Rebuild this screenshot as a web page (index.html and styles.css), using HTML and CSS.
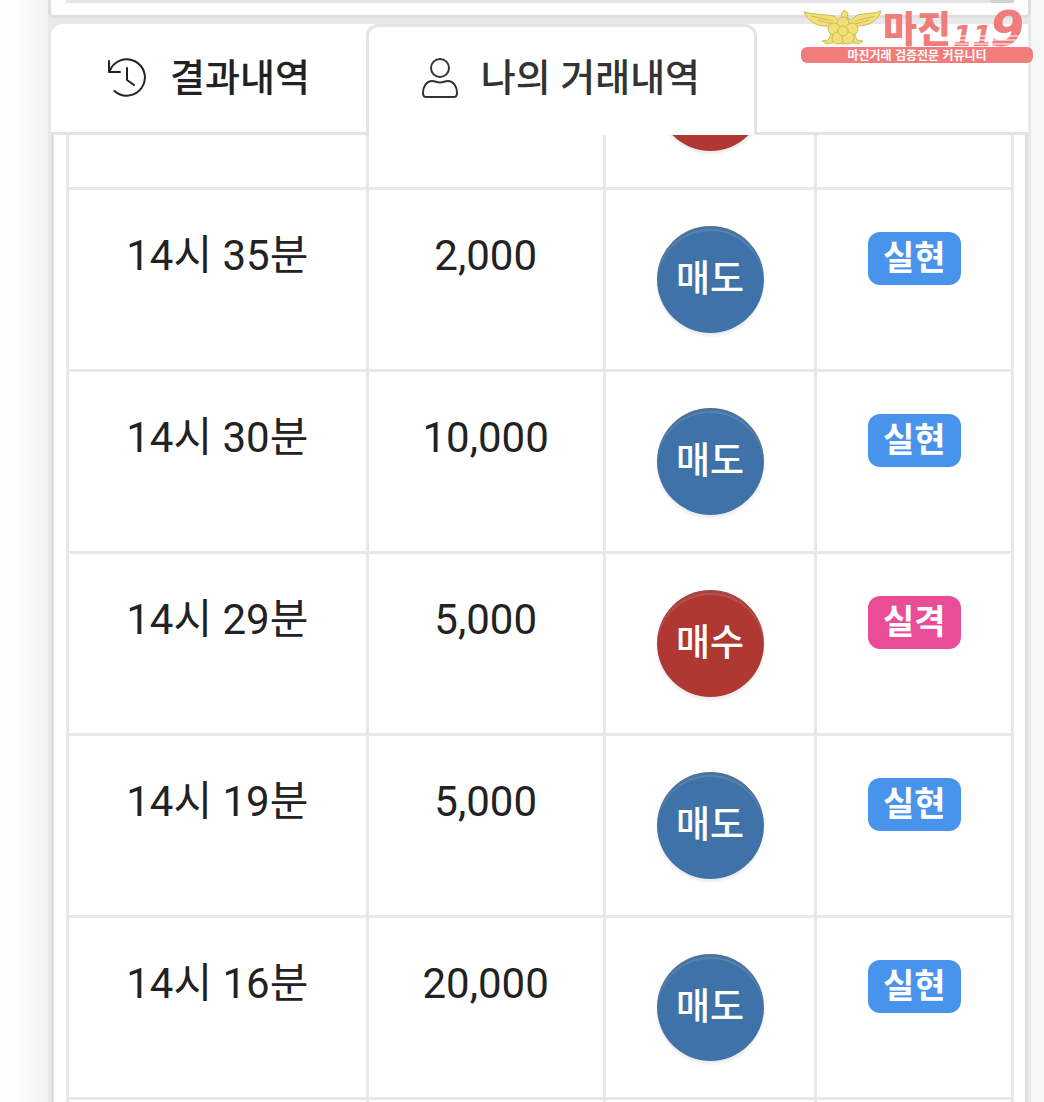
FILE: index.html
```html
<!DOCTYPE html>
<html lang="ko">
<head>
    <meta charset="UTF-8">
    <meta name="viewport" content="width=device-width, initial-scale=1.0">
    <title>나의 거래내역</title>
    <link rel="stylesheet" href="styles.css">
</head>
<body>
<div class="page">
    <div class="chart-box">
        <div class="scrollbar"><div class="scroll-thumb"></div></div>
    </div>

    <div class="history">
        <div class="tabs">
            <button class="tab" type="button">
                <svg class="tab-icon" viewBox="0 0 40 40" aria-hidden="true">
                    <path d="M2 3v11h11M2.500 13.500A18.200 18.200 0 1 1 7.500 33M20 10v12l7 5"/>
                </svg>
                <span>결과내역</span>
            </button>
            <button class="tab active" type="button">
                <svg class="tab-icon user" viewBox="2 0 36 40" aria-hidden="true">
                    <circle cx="20" cy="10" r="9"/>
                    <path d="M12 23c4 0 4 1.500 8 1.500s4-1.500 8-1.500c5 0 9 5 9 12 0 3-1 4-3 4H6c-2 0-3-1-3-4 0-7 4-12 9-12z"/>
                </svg>
                <span>나의 거래내역</span>
            </button>
        </div>

        <div class="panel">
            <table class="trades">
                <colgroup>
                    <col class="col-time">
                    <col class="col-amount">
                    <col class="col-side">
                    <col class="col-result">
                </colgroup>
                <tbody>
                    <tr>
                        <td></td>
                        <td></td>
                        <td><span class="side buy"></span></td>
                        <td></td>
                    </tr>
                    <tr>
                        <td>14시 35분</td>
                        <td>2,000</td>
                        <td><span class="side sell">매도</span></td>
                        <td><span class="badge win">실현</span></td>
                    </tr>
                    <tr>
                        <td>14시 30분</td>
                        <td>10,000</td>
                        <td><span class="side sell">매도</span></td>
                        <td><span class="badge win">실현</span></td>
                    </tr>
                    <tr>
                        <td>14시 29분</td>
                        <td>5,000</td>
                        <td><span class="side buy">매수</span></td>
                        <td><span class="badge lose">실격</span></td>
                    </tr>
                    <tr>
                        <td>14시 19분</td>
                        <td>5,000</td>
                        <td><span class="side sell">매도</span></td>
                        <td><span class="badge win">실현</span></td>
                    </tr>
                    <tr>
                        <td>14시 16분</td>
                        <td>20,000</td>
                        <td><span class="side sell">매도</span></td>
                        <td><span class="badge win">실현</span></td>
                    </tr>
                    <tr>
                        <td></td>
                        <td></td>
                        <td></td>
                        <td></td>
                    </tr>
                </tbody>
            </table>
        </div>
    </div>
</div>

<!-- Community logo over the top right corner -->
<div class="logo">
    <div class="logo-top">
        <svg class="emblem" viewBox="0 0 80 38" aria-hidden="true">
            <path d="M1 3c10 3 20 2 30 4l5 5 4-2-2-5 3-4 4 3-1 5 5 2 5-5c9-2 17-1 24-4-3 10-12 15-24 15l-2 9 2 5 6 1-5 3-8-2-7 2-8-2-8 2-5-3 6-1 3-5-2-9C15 18 5 13 1 3z"/>
            <path d="M8 7l22 5M14 11l16 4M72 7l-20 5M66 11l-14 4"/>
            <circle cx="40" cy="14" r="6"/>
            <circle cx="31" cy="20" r="6"/>
            <circle cx="49" cy="20" r="6"/>
            <circle cx="35" cy="29" r="6"/>
            <circle cx="45" cy="29" r="6"/>
            <circle cx="40" cy="22" r="5"/>
        </svg>
        <span class="logo-name">마진</span>
        <svg class="logo-number" viewBox="0 0 80 38">
            <text class="number-small" x="2" y="37">11</text>
            <text class="number-big" x="39" y="37">9</text>
            <path d="M0 27h74M0 31h74M0 35h74"/>
        </svg>
    </div>
    <div class="logo-slogan">마진거래 검증전문 커뮤니티</div>
</div>
</body>
</html>
```
FILE: styles.css
```css
* {
    box-sizing: border-box;
}

body {
    font-family: Roboto, 'Noto Sans CJK KR', sans-serif;
    color: #222;
    margin: 0;
    height: 100vh;
    overflow: hidden;
    background: #f7f7f7;
}

.page {
    display: flex;
    flex-direction: column;
    gap: 6px;
    height: 100%;
    padding: 0 13px 0 48px;
    background: linear-gradient(to right, #fff 0, #fdfdfd 16px, #f2f2f2 48px, #e9e9e9 48px, #e9e9e9 calc(100% - 13px), #f7f7f7 calc(100% - 13px));
}

.chart-box {
    height: 18px;
    padding: 0 14px 0 15px;
    background: #fdfdfd;
    border: 3px solid #dedede;
    border-top: none;
    border-radius: 0 0 6px 6px;
}

.scrollbar {
    height: 3px;
    background: #e4e4e4;
}

.scroll-thumb {
    width: 24px;
    height: 3px;
    margin-left: auto;
    background: #d2d2d6;
}

.history {
    flex: 1;
    display: flex;
    flex-direction: column;
    min-height: 0;
    padding: 0 3px;
}

.tabs {
    display: flex;
    height: 111px;
    background: linear-gradient(#e4e4e4, #e4e4e4) bottom / 100% 3px no-repeat #fff;
    border-radius: 12px 0 0 0;
}

.tab {
    display: flex;
    align-items: center;
    gap: 23px;
    padding: 0 56px 3px;
    border: none;
    background: none;
    color: #222;
    font-family: inherit;
    font-size: 38px;
    font-weight: 500;
    line-height: 56px;
    white-space: nowrap;
    cursor: pointer;
}

.tab.active {
    padding: 0 54px 6px 53px;
    background: #fff;
    border: 3px solid #e4e4e4;
    border-bottom: none;
    border-radius: 12px 12px 0 0;
    color: #333;
}

.tab-icon {
    width: 40px;
    height: 40px;
    flex: none;
    fill: none;
    stroke: currentColor;
    stroke-width: 2;
    stroke-linecap: round;
    stroke-linejoin: round;
}

.tab-icon.user {
    width: 36px;
}

.panel {
    flex: 1;
    min-height: 0;
    overflow: hidden;
    padding: 0 11px 0 12px;
    background: #fff;
    border: solid #e0e0e0;
    border-width: 0 3px;
}

/* list is scrolled, the first row is half under the tabs */
.trades {
    width: 100%;
    margin-top: -130px;
    border-collapse: collapse;
    table-layout: fixed;
}

.col-time {
    width: 31.7%;
}

.col-amount {
    width: 25.1%;
}

.col-side {
    width: 22.4%;
}

.col-result {
    width: 20.8%;
}

.trades td {
    height: 182px;
    padding: 36px 0 0;
    border: 3px solid #e8e8e8;
    font-size: 42px;
    line-height: 60px;
    text-align: center;
    vertical-align: top;
}

.side {
    display: block;
    width: 107px;
    height: 107px;
    margin: 0 auto;
    border-radius: 50%;
    color: #fff;
    font-size: 37px;
    font-weight: 500;
    line-height: 107px;
    box-shadow: inset 0 3px 0 rgba(0, 0, 0, 0.12), inset 0 5px 0 rgba(255, 255, 255, 0.12), 0 3px 3px rgba(0, 0, 0, 0.08);
}

.sell {
    background-color: #3f72a8;
}

.buy {
    background-color: #b03833;
}

.badge {
    display: block;
    width: 93px;
    margin: 6px auto 0;
    border-radius: 12px;
    color: #fff;
    font-size: 34px;
    font-weight: 700;
    line-height: 53px;
}

.win {
    background-color: #4894ed;
}

.lose {
    background-color: #ea4c98;
}

.logo {
    position: absolute;
    top: 9px;
    right: 11px;
    width: 232px;
    color: #f17c7c;
}

.logo-top {
    display: flex;
    align-items: flex-start;
    height: 38px;
    padding-left: 2px;
}

.emblem {
    flex: none;
    width: 80px;
    height: 38px;
    fill: #f3df72;
    stroke: #cdbb62;
    stroke-width: 1;
}

.logo-name {
    font-family: 'Noto Sans CJK KR', sans-serif;
    font-size: 37px;
    font-weight: 900;
    line-height: 36px;
    white-space: nowrap;
}

.logo-number {
    flex: none;
    width: 80px;
    height: 38px;
    overflow: visible;
    fill: #f17c7c;
    font-family: 'DejaVu Sans', sans-serif;
    font-style: italic;
    font-weight: 700;
}

.logo-number path {
    stroke: #fff;
    stroke-width: 1;
}

.number-small {
    font-size: 28px;
}

.number-big {
    font-size: 49px;
}

.logo-slogan {
    height: 16px;
    border-radius: 6px;
    background-color: #f17c7c;
    color: #fff;
    font-family: 'Noto Sans CJK KR', sans-serif;
    font-size: 12px;
    font-weight: 700;
    line-height: 16px;
    text-align: center;
}
```
